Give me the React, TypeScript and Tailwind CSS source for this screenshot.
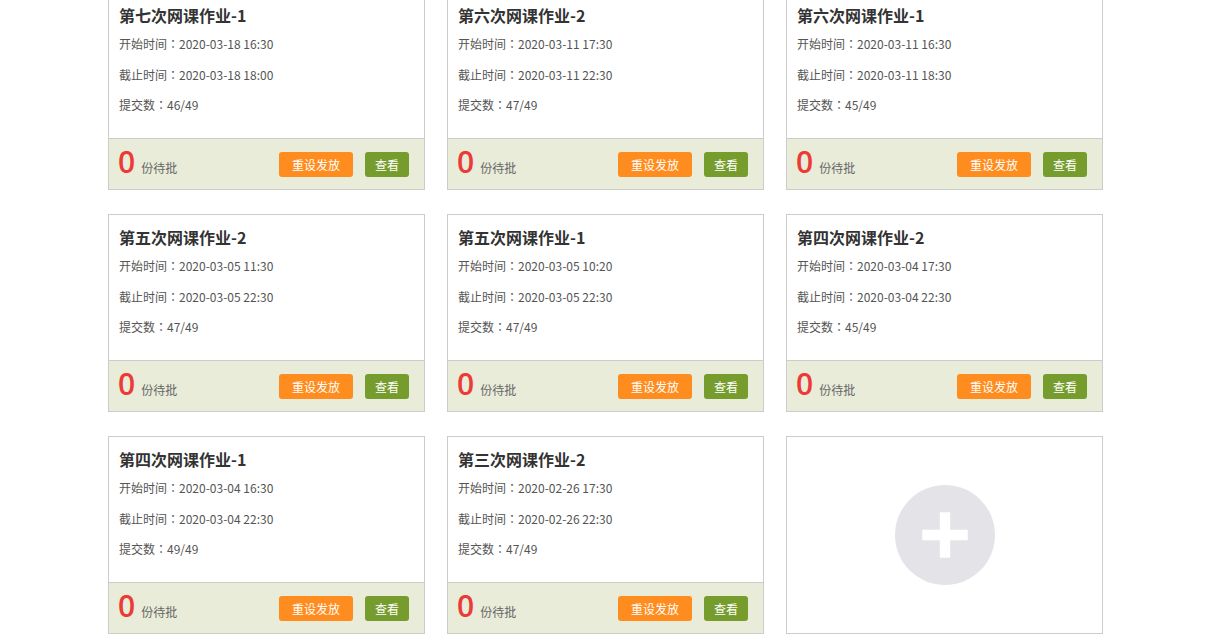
import { Plus } from "lucide-react";

type Homework = {
    id: number;
    title: string;
    start: string;
    end: string;
    submitted: string;
    pending: number;
};

const HOMEWORKS: Homework[] = [
    { id: 1, title: "第七次网课作业-1", start: "2020-03-18 16:30", end: "2020-03-18 18:00", submitted: "46/49", pending: 0 },
    { id: 2, title: "第六次网课作业-2", start: "2020-03-11 17:30", end: "2020-03-11 22:30", submitted: "47/49", pending: 0 },
    { id: 3, title: "第六次网课作业-1", start: "2020-03-11 16:30", end: "2020-03-11 18:30", submitted: "45/49", pending: 0 },
    { id: 4, title: "第五次网课作业-2", start: "2020-03-05 11:30", end: "2020-03-05 22:30", submitted: "47/49", pending: 0 },
    { id: 5, title: "第五次网课作业-1", start: "2020-03-05 10:20", end: "2020-03-05 22:30", submitted: "47/49", pending: 0 },
    { id: 6, title: "第四次网课作业-2", start: "2020-03-04 17:30", end: "2020-03-04 22:30", submitted: "45/49", pending: 0 },
    { id: 7, title: "第四次网课作业-1", start: "2020-03-04 16:30", end: "2020-03-04 22:30", submitted: "49/49", pending: 0 },
    { id: 8, title: "第三次网课作业-2", start: "2020-02-26 17:30", end: "2020-02-26 22:30", submitted: "47/49", pending: 0 },
];

// full-width colon, centred like the original font renders it
const Colon = () => <span className="font-['Noto_Sans_CJK_TC',sans-serif]">：</span>;

const HomeworkCard = ({ hw }: { hw: Homework }) => {
    return (
        <div className="border border-[#cccccc] bg-white">
            {/* card body */}
            <div className="h-[145px] pl-[10px] pt-[10px]">
                <h3 className="text-[16px] leading-[24px] font-bold text-[#333333]">{hw.title}</h3>
                <div className="mt-[2px] text-[12px] leading-[30.5px] text-[#555555]">
                    <p>开始时间<Colon />{hw.start}</p>
                    <p>截止时间<Colon />{hw.end}</p>
                    <p>提交数<Colon />{hw.submitted}</p>
                </div>
            </div>

            {/* footer */}
            <div className="h-[51px] border-t border-[#cccccc] bg-[#e8ecd9] flex items-center pl-[9px] pr-[15px] pt-[1px]">
                <div className="mb-[6px] flex items-baseline gap-[6px]">
                    <span className="text-[30px] leading-[30px] font-semibold text-[#ec3b36] font-['Open_Sans',sans-serif]">
                        {hw.pending}
                    </span>
                    <span className="text-[12px] text-[#666666]">份待批</span>
                </div>
                <div className="ml-auto flex gap-[12px]">
                    <button className="h-[25px] w-[74px] rounded-[3px] bg-[#ff8c1e] text-[12px] text-white">
                        重设发放
                    </button>
                    <button className="h-[25px] w-[44px] rounded-[3px] bg-[#779c2e] text-[12px] text-white">
                        查看
                    </button>
                </div>
            </div>
        </div>
    );
};

const AddCard = () => (
    <div className="h-[198px] border border-[#cccccc] bg-white flex items-center justify-center">
        <button className="w-[100px] h-[100px] rounded-full bg-[#e4e4e8] flex items-center justify-center">
            <Plus size={78} strokeWidth={3.2} strokeLinecap="butt" color="#ffffff" />
        </button>
    </div>
);

export default function App() {
    return (
        <div className="min-h-screen bg-white font-['Noto_Sans_CJK_SC','Microsoft_YaHei',sans-serif]">
            <div className="w-[995px] ml-[108px] -mt-[8px] grid grid-cols-3 gap-x-[22px] gap-y-[24px]">
                {HOMEWORKS.map((hw) => (
                    <HomeworkCard key={hw.id} hw={hw} />
                ))}
                <AddCard />
            </div>
        </div>
    );
}
